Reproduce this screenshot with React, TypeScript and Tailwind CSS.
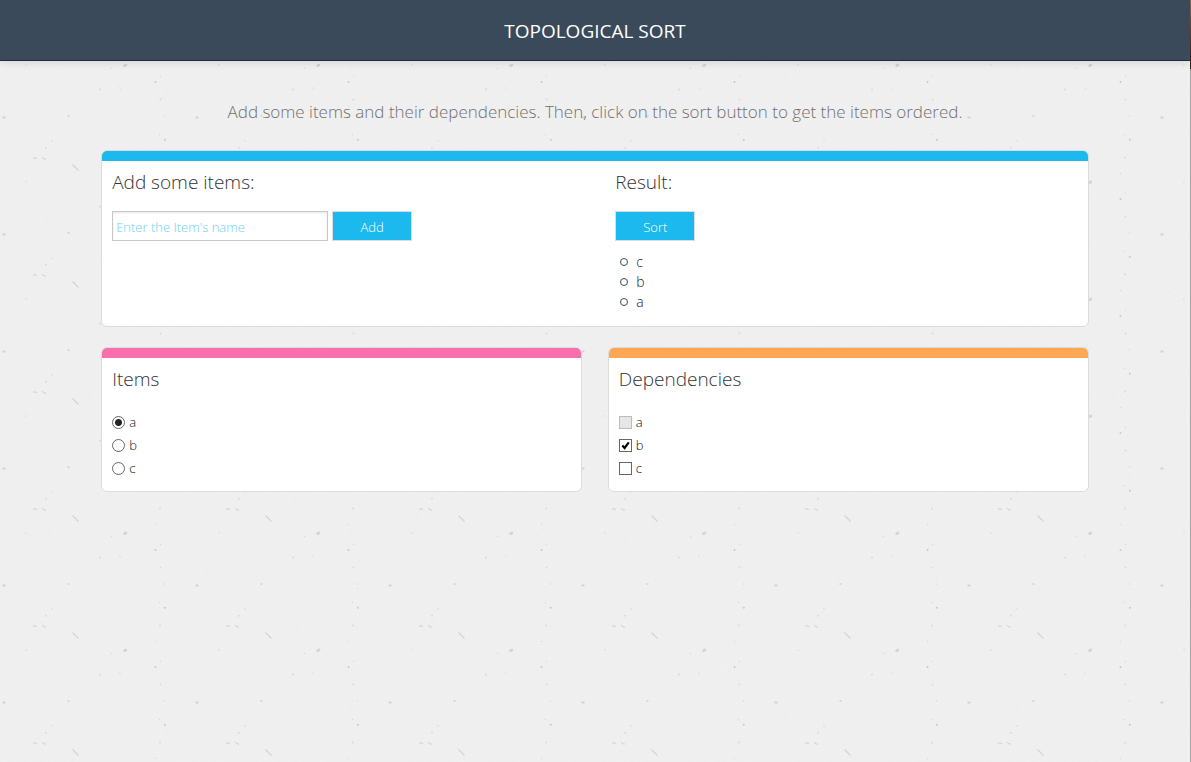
import { useState } from "react";
import type { ReactNode } from "react";

const sorted = ["c", "b", "a"];
const items = ["a", "b", "c"];

function PaperTexture() {
  return (
    <svg className="absolute inset-0 h-full w-full" aria-hidden="true">
      <defs>
        <filter id="grain" x="0" y="0" width="100%" height="100%">
          <feTurbulence type="fractalNoise" baseFrequency="0.25 0.4" numOctaves="3" seed="4" />
          <feColorMatrix values="0 0 0 0 0.72  0 0 0 0 0.72  0 0 0 0 0.72  0.5 0 0 0 -0.12" />
        </filter>
        <pattern id="paper" x="0" y="5" width="193" height="117" patternUnits="userSpaceOnUse">
          <g stroke="#cfcfcf" strokeWidth="1" fill="none">
            <path d="M33 36h3l1 1M42 35l2 2h2" />
            <path d="M72.500 42.500l6 6" stroke="#d4d4d4" strokeWidth="1.200" />
            <path d="M119 82l2 3" stroke="#e2e2e2" />
            <path d="M2.500 112.500h3" stroke="#d2d2d2" strokeWidth="2" />
            <path d="M67.500 111h2" strokeWidth="1.500" />
          </g>
          <ellipse cx="125.300" cy="60.300" rx="2.200" ry="1.500" fill="#d4d4d4" transform="rotate(-30 125.300 60.300)" />
          <g fill="#d8d8d8">
            <circle cx="26" cy="60" r="0.800" />
            <circle cx="111.500" cy="63.500" r="0.800" />
            <circle cx="100" cy="84.500" r="0.900" />
            <circle cx="160" cy="35.500" r="0.900" />
            <circle cx="155.500" cy="51.500" r="0.800" />
            <circle cx="160.500" cy="71.500" r="0.700" />
            <circle cx="155.500" cy="77" r="1" fill="#c8c8c8" />
            <circle cx="160.500" cy="94.500" r="0.900" />
            <circle cx="164.500" cy="111" r="0.800" />
            <circle cx="159.500" cy="12.500" r="0.800" />
            <circle cx="164.800" cy="17.800" r="1" fill="#c8c8c8" />
            <circle cx="52" cy="19" r="0.800" />
            <circle cx="46" cy="25.700" r="0.900" />
          </g>
        </pattern>
      </defs>
      <rect width="100%" height="100%" filter="url(#grain)" opacity="0.3" />
      <rect width="100%" height="100%" fill="url(#paper)" />
    </svg>
  );
}

function Card({ bar, className, children }: { bar: string; className?: string; children: ReactNode }) {
  return (
    <section className={`overflow-hidden rounded-md border border-[#dcdcdc] bg-white ${className ?? ""}`}>
      <div className={`h-2.5 ${bar}`} />
      <div className="px-2.5">{children}</div>
    </section>
  );
}

const heading = "h-[42px] text-[19px] leading-[42px] text-[#333]";
const button =
  "h-[30px] w-20 border border-[#dcdcdc] bg-[#1bb9ee] pt-0.5 text-[13px] leading-none text-white";

export default function App() {
  const [name, setName] = useState("");
  const [selected, setSelected] = useState("a");
  const [checked, setChecked] = useState<string[]>(["b"]);

  const toggle = (item: string) =>
    setChecked((now) => (now.includes(item) ? now.filter((i) => i !== item) : [...now, item]));

  return (
    <div className="flex min-h-screen bg-[#f0f0f0] font-['Open_Sans',sans-serif] font-light">
      <div className="relative min-w-0 flex-1">
        <PaperTexture />
        <div className="relative">
          <header className="border-b border-[#1c2a44] bg-[#3a4a5a] shadow-[0_2px_8px_rgba(0,0,0,0.1)]">
            <h1 className="pt-0.5 text-center text-[19px] leading-[58px] font-normal text-white">TOPOLOGICAL SORT</h1>
          </header>
          <main className="mx-auto w-[83%] pt-9">
            <p className="text-center text-[17px] leading-[30px] text-[#707070]">
              Add some items and their dependencies. Then, click on the sort button to get the items ordered.
            </p>
            <Card bar="bg-[#1bb9ee]" className="mt-[23px]">
              <div className="flex pb-3.5">
                <div className="w-[52.1%]">
                  <h2 className={heading}>Add some items:</h2>
                  <form className="mt-2 flex gap-1" onSubmit={(e) => e.preventDefault()}>
                    <input
                      type="text"
                      aria-label="Item's name"
                      value={name}
                      onChange={(e) => setName(e.target.value)}
                      placeholder="Enter the Item's name"
                      className="h-[30px] w-[216px] border border-[#c8c8c8] bg-white px-[3px] pt-0.5 text-[13px] text-[#444] shadow-[inset_0_1px_2px_rgba(0,0,0,0.1)] outline-none placeholder:text-[#6bd0f4]"
                    />
                    <button type="submit" className={button}>Add</button>
                  </form>
                </div>
                <div className="flex-1">
                  <h2 className={heading}>Result:</h2>
                  <button type="button" className={`mt-2 block ${button}`}>Sort</button>
                  <ul className="mt-[11px] pl-[5px] text-sm leading-5 text-[#222]">
                    {sorted.map((item) => (
                      <li key={item} className="flex items-center gap-2">
                        <span className="size-2 rounded-full border border-[#3a4a5a]" />
                        {item}
                      </li>
                    ))}
                  </ul>
                </div>
              </div>
            </Card>
            <div className="mt-5 flex justify-between">
              <Card bar="bg-[#f86fa9]" className="w-[48.7%]">
                <h2 className={heading}>Items</h2>
                <div className="mt-[11px] pb-[11px]">
                  {items.map((item) => (
                    <label key={item} className="flex h-[23px] items-center gap-1 text-[13px] text-[#111]">
                      <input
                        type="radio"
                        name="item"
                        checked={selected === item}
                        onChange={() => setSelected(item)}
                        className="size-[13px] appearance-none rounded-full border border-[#666] bg-white checked:bg-[radial-gradient(circle,#222_0_3px,white_4px)]"
                      />
                      {item}
                    </label>
                  ))}
                </div>
              </Card>
              <Card bar="bg-[#ffa755]" className="w-[48.7%]">
                <h2 className={heading}>Dependencies</h2>
                <div className="mt-[11px] pb-[11px]">
                  {items.map((item) => (
                    <label key={item} className="flex h-[23px] items-center gap-1 text-[13px] text-[#111]">
                      <span className="grid size-[13px]">
                        <input
                          type="checkbox"
                          disabled={item === selected}
                          checked={checked.includes(item)}
                          onChange={() => toggle(item)}
                          className="col-start-1 row-start-1 size-[13px] appearance-none border border-[#666] bg-white disabled:border-[#bcbcbc] disabled:bg-[#e6e6e6]"
                        />
                        {checked.includes(item) && (
                          <svg viewBox="0 0 13 13" className="pointer-events-none col-start-1 row-start-1 size-[13px]" aria-hidden="true">
                            <path d="M3.300 6.500l2.300 2.500L9.800 3.300" fill="none" stroke="#000" strokeWidth="2.200" />
                          </svg>
                        )}
                      </span>
                      {item}
                    </label>
                  ))}
                </div>
              </Card>
            </div>
          </main>
        </div>
      </div>
      <div className="flex w-px flex-col bg-[#a3a3a3]">
        <div className="h-[69px] bg-linear-to-b from-[#8a6750] to-[#2a1c18]" />
      </div>
    </div>
  );
}
